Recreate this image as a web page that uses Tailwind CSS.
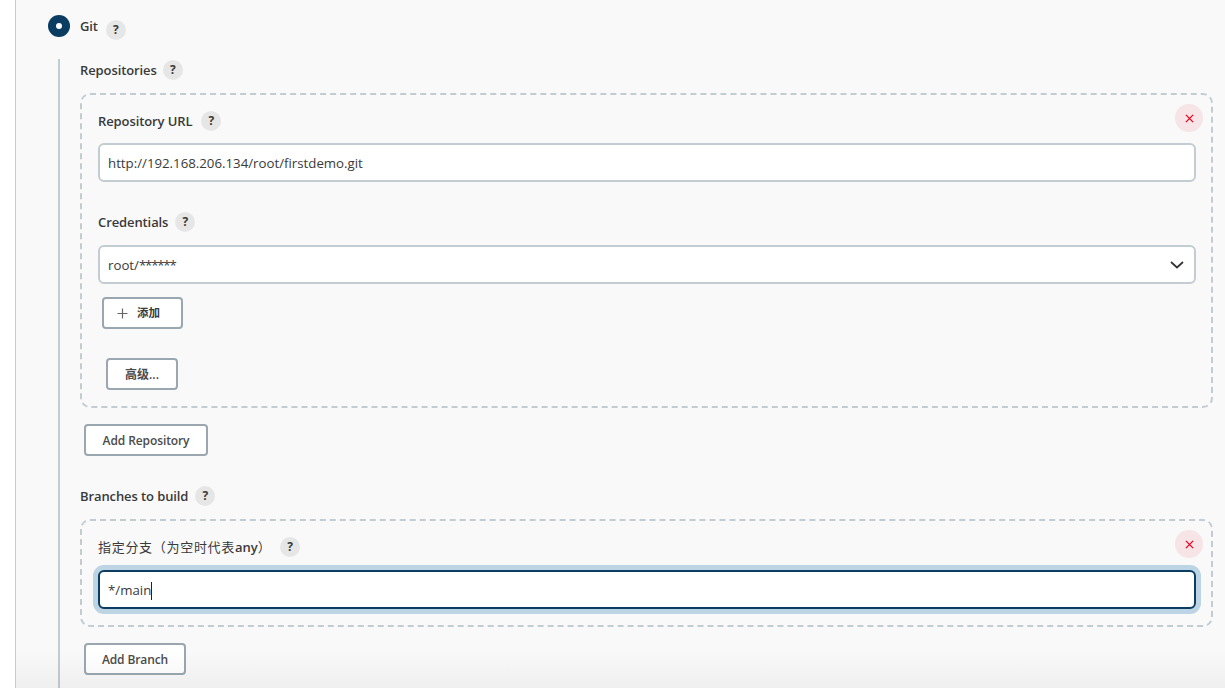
<!DOCTYPE html>
<html lang="en">
<head>
    <meta charset="UTF-8">
    <title>Git SCM</title>
    <script src="https://cdn.jsdelivr.net/npm/@tailwindcss/browser@4"></script>
</head>
<body class="bg-white overflow-hidden font-['Open_Sans','Noto_Sans_CJK_SC',sans-serif] text-[13px] text-[#3a3a3a]">
<div class="relative w-[1225px] h-[692px] overflow-hidden">
    <!-- panel -->
    <div class="ml-[15px] h-[688px] border-l border-[#c3ccd1] bg-[#f9f9f9] pl-[32px] pt-[15px]">

        <!-- git radio -->
        <div class="flex h-[22px] items-center">
            <span class="flex w-[22px] h-[22px] items-center justify-center rounded-full bg-[#0b3d62]">
                <span class="w-[6px] h-[6px] rounded-full bg-white"></span>
            </span>
            <span class="ml-[10px] font-semibold leading-none tracking-[-0.1px]">Git</span>
            <span class="ml-[8px] mt-[8px] flex w-[20px] h-[20px] items-center justify-center rounded-full bg-[#e6e6e6] text-[12px] font-bold">?</span>
        </div>

        <!-- nested -->
        <div class="mt-[22px] ml-[10px] h-[629px] border-l-2 border-[#c3ccd1] pl-[20px] pt-px">

            <div class="flex h-[20px] items-center font-semibold tracking-[-0.1px]">
                <span class="pt-px">Repositories</span>
                <span class="ml-[6px] flex w-[20px] h-[20px] items-center justify-center rounded-full bg-[#e6e6e6] text-[12px] font-bold">?</span>
            </div>

            <div class="relative mt-[13px] w-[1133px] h-[315px] rounded-[10px] border-2 border-dashed border-[#c3ccd1] px-[16px] pt-[16px]">
                <button class="absolute right-[8px] top-[9px] flex w-[28px] h-[28px] items-center justify-center rounded-full bg-[#f6e4e7]">
                    <svg width="9" height="9" viewBox="0 0 10 10"><path d="M1 1l8 8M9 1l-8 8" stroke="#e6001f" stroke-width="1.4" fill="none"/></svg>
                </button>

                <div class="flex h-[20px] items-center font-semibold tracking-[-0.1px]">
                    <span class="pt-px">Repository URL</span>
                    <span class="ml-[9px] flex w-[20px] h-[20px] items-center justify-center rounded-full bg-[#e6e6e6] text-[12px] font-bold">?</span>
                </div>
                <div class="mt-[12px] flex w-[1098px] h-[39px] items-center rounded-[6px] border-2 border-[#c3ccd1] bg-white pl-[8px] pt-[2px] text-[13.25px]">http://192.168.206.134/root/firstdemo.git</div>

                <div class="mt-[30px] flex h-[20px] items-center font-semibold tracking-[-0.1px]">
                    <span class="pt-px">Credentials</span>
                    <span class="ml-[7px] flex w-[20px] h-[20px] items-center justify-center rounded-full bg-[#e6e6e6] text-[12px] font-bold">?</span>
                </div>
                <div class="mt-[13px] flex w-[1098px] h-[39px] items-center justify-between rounded-[6px] border-2 border-[#c3ccd1] bg-white pl-[8px] pr-[10px]">
                    <span class="pt-[2px] text-[13.25px]">root/<span class="tracking-[-1.2px]">******</span></span>
                    <svg width="14" height="8" viewBox="0 0 14 8"><path d="M1 1l6 5.5L13 1" stroke="#333" stroke-width="1.7" fill="none"/></svg>
                </div>

                <button class="mt-[13px] ml-[4px] flex w-[81px] h-[32px] items-center rounded-[4px] border-2 border-[#9aa7b0] bg-white pl-[13px] text-[11.5px] font-semibold">
                    <svg width="11" height="11" viewBox="0 0 11 11"><path d="M5.5 0.5v10M0.5 5.5h10" stroke="#666" stroke-width="1.2" fill="none"/></svg>
                    <span class="ml-[9px]">添加</span>
                </button>
                <button class="mt-[29px] ml-[8px] flex w-[72px] h-[32px] items-center justify-center rounded-[4px] border-2 border-[#9aa7b0] bg-white pt-[2px] text-[12px] font-semibold text-[#4b4b4b]">高级...</button>
            </div>

            <button class="mt-[16px] ml-[4px] flex w-[124px] h-[32px] items-center justify-center rounded-[4px] border-2 border-[#9aa7b0] bg-white pt-px text-[12px] font-semibold text-[#4b4b4b] tracking-[-0.1px]">Add Repository</button>

            <div class="mt-[30px] flex h-[20px] items-center font-semibold tracking-[-0.1px]">
                <span class="pt-px">Branches to build</span>
                <span class="ml-[7px] flex w-[20px] h-[20px] items-center justify-center rounded-full bg-[#e6e6e6] text-[12px] font-bold">?</span>
            </div>

            <div class="relative mt-[13px] w-[1133px] h-[108px] rounded-[10px] border-2 border-dashed border-[#c3ccd1] px-[16px] pt-[16px]">
                <button class="absolute right-[8px] top-[9px] flex w-[28px] h-[28px] items-center justify-center rounded-full bg-[#f6e4e7]">
                    <svg width="9" height="9" viewBox="0 0 10 10"><path d="M1 1l8 8M9 1l-8 8" stroke="#e6001f" stroke-width="1.4" fill="none"/></svg>
                </button>
                <div class="flex h-[20px] items-center">
                    <span class="whitespace-nowrap w-[175px] pt-px tracking-[0.7px]">指定分支（为空时代表<span class="font-semibold tracking-normal">any</span>）</span>
                    <span class="ml-[7px] flex w-[20px] h-[20px] items-center justify-center rounded-full bg-[#e6e6e6] text-[12px] font-bold">?</span>
                </div>
                <div class="mt-[13px] flex w-[1098px] h-[39px] items-center rounded-[6px] border-2 border-[#0b3d62] bg-white pl-[8px] pt-[2px] text-[13.25px] shadow-[0_0_0_5px_#bcd4e3]">
                    <span>*/main</span><span class="w-px h-[18px] bg-[#222]"></span>
                </div>
            </div>

            <button class="mt-[16px] ml-[4px] flex w-[102px] h-[32px] items-center justify-center rounded-[4px] border-2 border-[#9aa7b0] bg-white pt-px text-[12px] font-semibold text-[#4b4b4b] tracking-[-0.1px]">Add Branch</button>
        </div>
    </div>

    <!-- sticky bar fade over the bottom of the panel -->
    <div class="absolute left-[16px] right-0 top-[650px] h-[38px] bg-gradient-to-b from-transparent to-black/[0.04] pointer-events-none"></div>
</div>
</body>
</html>
